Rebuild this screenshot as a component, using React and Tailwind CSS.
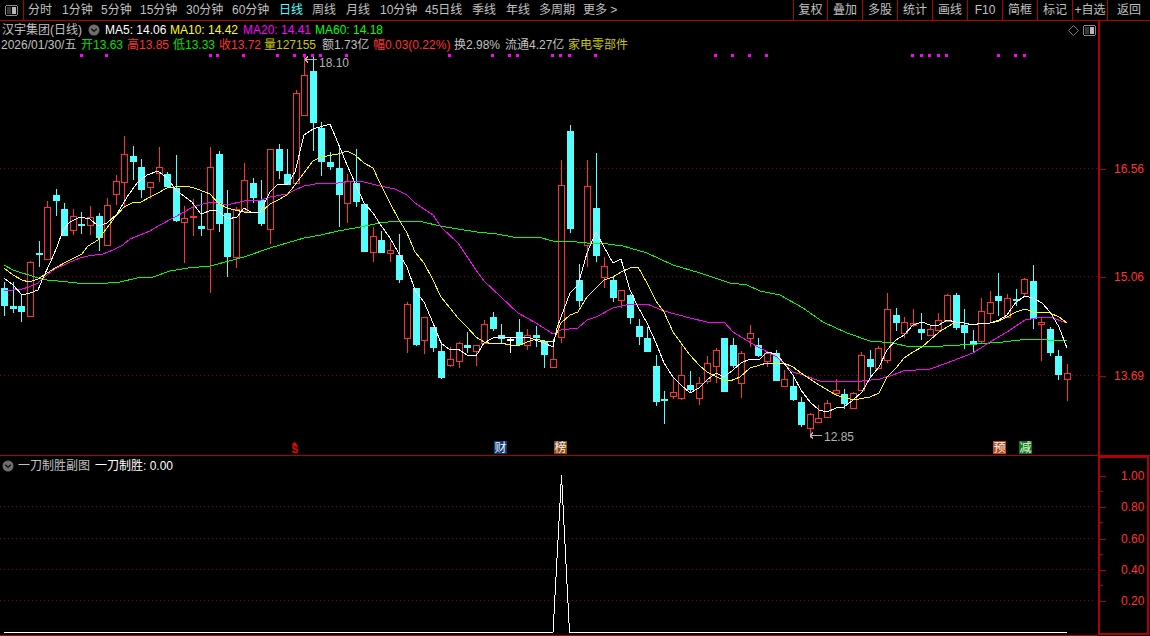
const UP = "#ff3232";
const DOWN = "#54ffff";
const GRID = "#8c0000";

// [type, bodyTop, bodyBottom, high, low] - one per trading day, left to right
const candles = [
  ["c",288,306,282,316],["c",306,309,282,313],["c",306,312,295,322],["r",262,316,261,316],["c",253,254,241,267],
  ["r",207,259,201,260],["c",195,201,189,216],["c",209,236,203,236],["r",216,230,209,235],["c",224,225,212,234],
  ["r",217,225,206,235],["c",216,238,213,251],["r",205,245,198,245],["r",181,194,175,205],["r",154,182,136,208],
  ["c",156,162,146,180],["c",167,190,159,198],["r",182,187,182,199],["r",167,173,147,182],["c",174,187,172,188],
  ["c",188,221,155,222],["r",218,222,206,263],["r",216,217,199,236],["c",226,229,193,236],["r",167,229,147,293],
  ["c",154,224,151,232],["c",213,257,190,277],["r",209,257,207,268],["r",180,211,163,211],["c",183,198,178,203],
  ["c",200,224,180,226],["r",149,229,149,244],["c",149,171,144,179],["c",174,185,149,185],["r",93,183,90,183],
  ["r",75,115,57,115],["c",71,123,57,151],["c",128,162,122,176],["c",162,167,152,170],["c",168,195,147,227],
  ["r",181,203,174,223],["c",183,202,149,207],["c",204,252,204,252],["r",236,252,227,262],["c",240,253,231,253],
  ["r",250,253,242,262],["c",255,280,234,283],["r",304,338,302,353],["c",288,345,288,346],["r",317,340,317,354],
  ["c",327,348,327,352],["c",351,378,342,379],["r",359,365,347,367],["r",343,361,342,368],["c",345,348,332,353],
  ["r",345,351,345,366],["r",324,343,320,343],["c",317,329,312,331],["c",335,339,324,343],["w",339,340,337,353],
  ["c",332,345,319,345],["r",335,345,329,350],["c",335,338,326,347],["c",341,355,340,368],["r",359,367,347,368],
  ["r",185,337,160,343],["c",131,229,125,233],["c",280,301,264,307],["r",186,245,160,267],["c",208,256,153,262],
  ["r",266,277,257,288],["c",280,298,277,302],["r",290,300,290,308],["c",295,318,294,324],["c",326,337,319,345],
  ["c",338,352,327,352],["c",366,402,355,406],["c",399,400,391,424],["r",392,396,377,399],["r",375,398,346,400],
  ["c",385,390,371,393],["r",383,398,377,405],["r",363,381,356,384],["r",350,366,348,383],["c",338,392,338,392],
  ["c",345,366,338,368],["r",353,383,351,398],["r",333,338,325,347],["c",345,356,338,357],["r",353,361,352,367],
  ["c",353,381,350,381],["r",379,386,370,387],["c",386,400,377,401],["c",402,425,397,427],["r",414,428,413,438],
  ["r",418,422,405,423],["r",403,417,400,418],["r",390,393,379,395],["c",394,404,389,409],["r",393,408,392,408],
  ["r",355,390,352,391],["c",359,367,350,378],["r",348,368,346,369],["r",309,360,293,363],["c",315,323,308,331],
  ["r",322,333,317,338],["r",323,325,309,327],["c",329,333,313,340],["r",329,335,326,336],["r",320,330,313,330],
  ["r",295,321,294,322],["c",295,328,293,330],["c",325,333,309,349],["c",341,344,330,353],["r",311,341,298,343],
  ["r",302,313,291,323],["c",296,301,273,316],["r",298,317,294,317],["c",299,300,289,306],["r",279,293,278,296],
  ["c",281,319,265,329],["r",322,324,317,361],["c",329,353,327,356],["c",356,375,350,380],["r",373,379,364,401],
];

const ma5 = "4,278 13,285 22,295 30,293 38,290 43,278 50,263 57,247 63,230 70,222 80,217 90,219 98,226 107,223 117,214 127,197 137,183 147,175 158,171 167,178 177,191 192,202 201,214 212,210 218,211 228,219 237,217 244,208 252,213 260,212 270,192 278,184 287,185 295,172 304,135 313,129 330,124 338,143 347,165 355,183 364,203 373,213 380,224 390,238 398,252 407,267 415,290 424,302 433,323 441,343 450,350 458,349 467,355 476,356 484,343 493,338 510,337 527,337 544,343 553,347 557,328 561,317 570,293 578,285 587,253 596,232 604,247 613,263 621,259 630,290 638,307 647,323 656,343 664,363 673,377 681,385 690,393 699,388 707,380 716,373 724,377 733,370 741,363 750,359 760,359 767,352 776,354 784,363 793,375 801,390 810,402 819,410 827,412 836,408 844,407 853,400 862,392 870,378 879,367 887,350 896,340 904,335 913,325 922,322 930,325 939,325 947,320 956,322 964,323 973,325 982,323 990,323 999,320 1007,315 1016,302 1025,296 1033,298 1042,303 1050,312 1059,327 1067,348";
const ma10 = "4,268 13,275 22,280 29,282 38,279 44,275 55,268 68,261 82,254 88,246 98,240 107,228 115,217 124,207 132,203 141,202 150,197 158,193 167,188 175,187 187,186 197,189 210,194 218,203 227,208 235,210 244,212 261,212 270,204 278,200 287,195 295,185 304,173 313,161 321,157 338,154 347,151 355,155 364,163 373,168 380,183 390,203 398,218 407,233 415,252 424,263 433,280 441,297 450,308 458,318 467,327 476,337 484,342 493,344 501,343 510,345 518,346 527,342 536,339 544,341 553,342 561,323 570,315 578,312 587,297 596,288 604,280 613,277 621,272 630,268 638,267 647,283 656,301 664,312 673,332 681,343 690,355 699,365 707,372 723,380 730,381 740,377 750,368 767,363 784,363 793,367 801,373 819,385 836,395 853,400 870,397 879,393 887,377 896,368 904,358 913,352 922,347 930,340 939,332 947,327 956,322 964,323 973,325 982,323 990,323 999,321 1007,317 1016,312 1025,309 1033,312 1042,312 1050,313 1059,317 1067,323";
const ma20 = "4,290 13,290 22,289 29,287 38,283 47,275 55,269 68,263 80,258 88,256 103,254 113,250 123,245 130,239 140,235 150,231 158,226 175,217 193,207 210,202 227,205 244,201 261,200 270,197 287,194 295,190 304,186 321,183 338,183 355,181 364,182 380,186 395,189 407,195 415,203 433,215 441,227 458,243 476,270 484,281 501,297 518,313 536,323 553,334 561,330 578,328 587,320 596,317 613,308 630,304 647,304 664,311 690,318 707,322 724,322 733,332 741,337 758,347 777,357 793,372 803,375 820,381 853,382 880,379 893,375 903,371 930,369 947,363 973,353 990,342 1007,332 1025,320 1042,317 1050,317 1067,323";
const ma60 = "4,265 13,270 22,273 29,275 38,278 47,280 68,282 77,283 108,283 120,282 137,278 153,277 170,271 188,268 210,266 233,260 244,257 270,248 287,243 304,238 321,235 338,231 355,228 380,223 397,221 423,222 440,226 458,229 477,232 497,234 513,237 538,237 553,241 577,242 587,243 600,243 623,246 647,253 673,265 700,273 730,283 747,285 760,291 780,295 803,308 823,322 847,333 870,341 893,343 910,347 943,346 977,344 1003,342 1028,339 1067,341";

const topDots = [81,106,210,217,243,277,294,304,312,320,346,449,492,509,517,552,560,569,595,715,732,749,766,912,921,929,938,946,998,1015,1024];

const navTabs = [
  ["分时", "w-[34px]"],["1分钟", "w-[39px]"],["5分钟", "w-[39px]"],["15分钟", "w-[46px]"],["30分钟", "w-[46px]"],
  ["60分钟", "w-[47px]"],["日线", "w-[33px]"],["周线", "w-[34px]"],["月线", "w-[34px]"],["10分钟", "w-[45px]"],
  ["45日线", "w-[47px]"],["季线", "w-[34px]"],["年线", "w-[33px]"],["多周期", "w-[44px]"],
];
const rightBtns = ["复权","叠加","多股","统计","画线","F10","简框","标记","+自选"];

const mainTicks = [[168,"16.56"],[276,"15.06"],[375,"13.69"]];
const subTicks = [[475,"1.00"],[506,"0.80"],[538,"0.60"],[569,"0.40"],[600,"0.20"]];

const LayoutIcon = () => (
  <svg width="13" height="11" viewBox="0 0 13 11" shapeRendering="crispEdges">
    <rect x="0.5" y="0.5" width="12" height="10" rx="2" fill="none" stroke="#8c8c8c" />
    <rect x="7" y="2" width="4" height="7" fill="#b8b8b8" />
    <rect x="2" y="2" width="4" height="7" fill="#3a3a3a" />
  </svg>
);

const ChevronDot = () => (
  <svg width="12" height="12" viewBox="0 0 12 12">
    <circle cx="6" cy="6" r="5.5" fill="#6e6e6e" />
    <path d="M3.3 4.8 L6 7.4 L8.7 4.8" fill="none" stroke="#111" strokeWidth="1.4" />
  </svg>
);

const Candle = ({ d, i }) => {
  const [type, top, bottom, high, low] = d;
  const x = Math.round(4.33 + 8.57 * i);
  const color = type === "r" ? UP : type === "w" ? "#ffffff" : DOWN;
  const thin = bottom - top <= 1;
  return (
    <g shapeRendering="crispEdges">
      <line x1={x + 0.5} x2={x + 0.5} y1={high} y2={top} stroke={color} />
      <line x1={x + 0.5} x2={x + 0.5} y1={bottom} y2={low} stroke={color} />
      {thin ? (
        <rect x={x - 3} y={top} width="7" height="2" fill={color} />
      ) : type === "r" ? (
        <rect x={x - 2.5} y={top + 0.5} width="6" height={bottom - top} fill="#000" stroke={color} />
      ) : (
        <rect x={x - 3} y={top} width="7" height={bottom - top} fill={color} />
      )}
    </g>
  );
};

const Badge = ({ x, bg, label }) => (
  <g>
    <rect x={x} y="441" width="13" height="13" fill={bg} />
    <text x={x + 0.5} y="452" fontSize="12" fill="#f2f2f2" className="font-['Noto_Sans_CJK_SC',sans-serif]">{label}</text>
  </g>
);

const PriceNote = ({ x, y, textY, label }) => (
  <g>
    <path d={`M${x} ${y + 0.5} h12 M${x} ${y + 0.5} l3 -3 M${x} ${y + 0.5} l3 3`} stroke="#b4b4b4" fill="none" shapeRendering="crispEdges" />
    <text x={x + 14} y={textY} fontSize="12" fill="#b4b4b4">{label}</text>
  </g>
);

function MainChart() {
  return (
    <svg className="absolute inset-0 block" width="1098" height="434" viewBox="0 21 1098 434">
      {mainTicks.map(([y]) => (
        <line key={y} x1="0" x2="1098" y1={y + 0.5} y2={y + 0.5} stroke={GRID} strokeDasharray="1 3" shapeRendering="crispEdges" />
      ))}
      {topDots.map((x) => (
        <rect key={x} x={x - 1} y="54" width="3" height="3" fill="#ff00ff" />
      ))}
      {candles.map((d, i) => (
        <Candle key={i} d={d} i={i} />
      ))}
      <g fill="none" shapeRendering="crispEdges">
        <polyline points={ma60} stroke="#00ff00" />
        <polyline points={ma20} stroke="#ff00ff" />
        <polyline points={ma10} stroke="#ffff00" />
        <polyline points={ma5} stroke="#ffffff" />
      </g>
      <PriceNote x={305} y={59} textY={67} label="18.10" />
      <PriceNote x={810} y={435} textY={441} label="12.85" />
      <path d="M294.5 442 l3 3 h-6 z" fill="#ff0000" />
      <text x="291.5" y="453" fontSize="10" fontWeight="700" fill="#ff0000">S</text>
      <Badge x={494} bg="#0b3d78" label="财" />
      <Badge x={554} bg="#8a4a12" label="榜" />
      <Badge x={993} bg="#b84a14" label="预" />
      <Badge x={1019} bg="#0a7a0a" label="减" />
    </svg>
  );
}

function SubChart() {
  return (
    <svg className="absolute inset-0 block" width="1098" height="179" viewBox="0 456 1098 179">
      {[506, 538, 569, 600].map((y) => (
        <line key={y} x1="0" x2="1095" y1={y + 0.5} y2={y + 0.5} stroke={GRID} strokeDasharray="1 3" shapeRendering="crispEdges" />
      ))}
      <polyline points="4,632.5 553,632.5 561.5,475 569.5,632.5 1067,632.5" fill="none" stroke="#fff" shapeRendering="crispEdges" />
    </svg>
  );
}

export default function App() {
  return (
    <div className="flex h-[636px] w-[1150px] flex-col overflow-hidden bg-black text-[12px] leading-[14px] text-[#c0c0c0] font-['Liberation_Sans','Noto_Sans_CJK_SC',sans-serif]">
      <header className="flex h-[21px] shrink-0 items-center border-b border-[#b00000]">
        <div className="flex h-full w-[24px] items-center justify-center border-r border-[#b00000]">
          <LayoutIcon />
        </div>
        <nav className="flex flex-1 items-center pl-[4px]">
          {navTabs.map(([t, w]) => (
            <span key={t} className={`${w} ${t === "日线" ? "text-[#5ff]" : ""}`}>{t}</span>
          ))}
          <span>更多 &gt;</span>
        </nav>
        <div className="flex h-full">
          {rightBtns.map((b, i) => (
            <span
              key={b}
              className={`flex h-full items-center justify-center border-l border-[#b00000] ${i === 0 ? "w-[34px]" : "w-[35px]"}`}
            >
              {b}
            </span>
          ))}
          <span className="flex h-full w-[43px] items-center justify-center border-l border-[#b00000]">返回</span>
        </div>
      </header>

      <div className="flex min-h-0 flex-1">
        <div className="flex w-[1098px] flex-col">
          <section className="relative h-[435px] shrink-0 border-b border-[#b00000]">
            <MainChart />
            <div className="relative flex flex-col pl-[2px] pt-[2px]">
              <div className="flex h-[14px] items-center">
                <span>汉宇集团(日线)</span>
                <span className="ml-[6px] mr-[5px]"><ChevronDot /></span>
                <span className="w-[65px] text-white">MA5: 14.06</span>
                <span className="w-[73px] text-[#ffff00]">MA10: 14.42</span>
                <span className="w-[72px] text-[#ff00ff]">MA20: 14.41</span>
                <span className="text-[#00ff00]">MA60: 14.18</span>
              </div>
              <div className="mt-[1px] flex h-[14px] items-center -ml-[1px] whitespace-pre">
                <span className="w-[80px]">2026/01/30/五</span>
                <span className="w-[46px] text-[#00e000]">开13.63</span>
                <span className="w-[46px] text-[#ff3232]">高13.85</span>
                <span className="w-[46px] text-[#00e000]">低13.33</span>
                <span className="w-[45px] text-[#ff3232]">收13.72</span>
                <span className="w-[58px] text-[#c8c800]">量127155</span>
                <span className="w-[51px]">额1.73亿</span>
                <span className="w-[81px] text-[#ff3232]">幅0.03(0.22%)</span>
                <span className="w-[51px]">换2.98%</span>
                <span className="w-[63px]">流通4.27亿</span>
                <span className="text-[#c8c800]">家电零部件</span>
              </div>
            </div>
            <div className="absolute right-[2px] top-[4px] flex items-center gap-[4px]">
              <svg width="11" height="11" viewBox="0 0 11 11">
                <path d="M5.5 0.5 L10.5 5.5 L5.5 10.5 L0.5 5.5 Z" fill="none" stroke="#7a7a7a" />
              </svg>
              <LayoutIcon />
            </div>
          </section>

          <section className="relative min-h-0 flex-1 border-b border-[#b00000]">
            <SubChart />
            <div className="relative flex h-[18px] items-center pl-[2px] pt-[1px]">
              <ChevronDot />
              <span className="ml-[4px]">一刀制胜副图</span>
              <span className="ml-[5px] text-white">一刀制胜: 0.00</span>
            </div>
          </section>
        </div>

        <aside className="flex w-[52px] flex-col text-[#ff3232]">
          <div className="relative h-[435px] shrink-0 border-b border-l-2 border-[#b00000]">
            {mainTicks.map(([y, v]) => (
              <div key={y} className="absolute left-0 right-0 flex items-center" style={{ top: y - 21 - 6 }}>
                <span className="h-px w-[6px] bg-[#b00000]" />
                <span className="ml-[8px]">{v}</span>
              </div>
            ))}
          </div>
          <div className="relative mr-[1px] mb-[1px] min-h-0 flex-1 border-2 border-[#b00000]">
            {subTicks.map(([y, v]) => (
              <div key={y} className="absolute left-0 right-0 flex items-center" style={{ top: y - 458 - 6 }}>
                <span className="h-px w-[6px] bg-[#b00000]" />
                <span className="ml-[15px]">{v}</span>
              </div>
            ))}
            {[491, 522, 554, 585].map((y) => (
              <span key={y} className="absolute left-0 h-px w-[3px] bg-[#b00000]" style={{ top: y - 458 }} />
            ))}
          </div>
        </aside>
      </div>
    </div>
  );
}
